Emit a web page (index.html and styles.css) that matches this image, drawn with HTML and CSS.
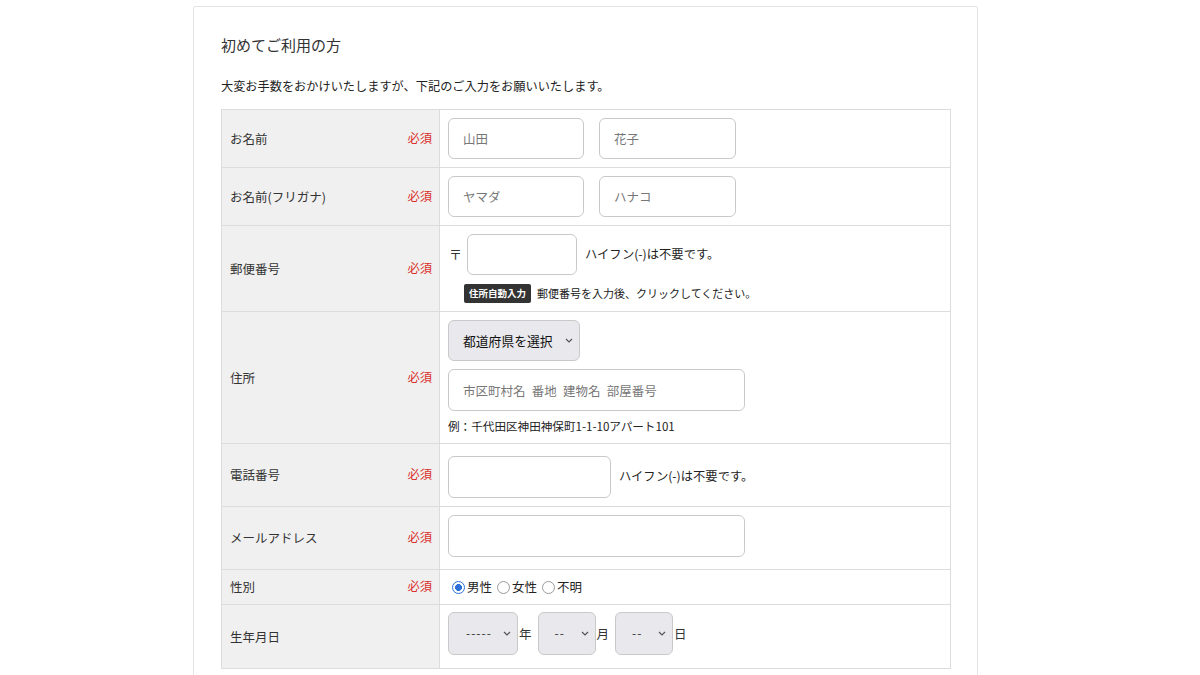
FILE: index.html
```html
<!DOCTYPE html>
<html lang="ja">
<head>
<meta charset="utf-8">
<title>初めてご利用の方</title>
<link rel="stylesheet" href="styles.css">
</head>
<body>
<div class="card">
  <h2 class="title">初めてご利用の方</h2>
  <p class="lead">大変お手数をおかけいたしますが、下記のご入力をお願いいたします。</p>
  <table class="form">
    <colgroup><col class="c-label"><col class="c-field"></colgroup>
    <tr>
      <th><div class="lbl"><span>お名前</span><span class="req">必須</span></div></th>
      <td class="r-name"><div class="pair"><input class="inp w-name" placeholder="山田"><input class="inp w-name2" placeholder="花子"></div></td>
    </tr>
    <tr>
      <th><div class="lbl"><span>お名前(フリガナ)</span><span class="req">必須</span></div></th>
      <td class="r-kana"><div class="pair"><input class="inp w-name" placeholder="ヤマダ"><input class="inp w-name2" placeholder="ハナコ"></div></td>
    </tr>
    <tr>
      <th><div class="lbl"><span>郵便番号</span><span class="req">必須</span></div></th>
      <td class="r-zip">
        <div class="line"><span class="zipmark">〒</span><input class="inp w-zip"><span class="note">ハイフン(-)は不要です。</span></div>
        <div class="line auto"><span class="btn">住所自動入力</span><span class="small">郵便番号を入力後、クリックしてください。</span></div>
      </td>
    </tr>
    <tr>
      <th><div class="lbl"><span>住所</span><span class="req">必須</span></div></th>
      <td class="r-addr">
        <div class="sel w-pref"><span class="sel-text">都道府県を選択</span><svg class="chev" viewBox="0 0 8 5" width="8" height="5"><path d="M1 1 L4 4 L7 1" fill="none" stroke="#555" stroke-width="1.2"/></svg></div>
        <input class="inp w-long addr" placeholder="市区町村名&ensp;番地&ensp;建物名&ensp;部屋番号">
        <p class="example">例：千代田区神田神保町1-1-10アパート101</p>
      </td>
    </tr>
    <tr>
      <th><div class="lbl"><span>電話番号</span><span class="req">必須</span></div></th>
      <td class="r-tel"><div class="line"><input class="inp w-tel"><span class="note">ハイフン(-)は不要です。</span></div></td>
    </tr>
    <tr>
      <th><div class="lbl"><span>メールアドレス</span><span class="req">必須</span></div></th>
      <td class="r-mail"><div class="line"><input class="inp w-long"></div></td>
    </tr>
    <tr>
      <th><div class="lbl"><span>性別</span><span class="req">必須</span></div></th>
      <td class="r-sex">
        <div class="radios">
          <span class="radio on"></span><span class="rlabel">男性</span>
          <span class="radio"></span><span class="rlabel">女性</span>
          <span class="radio"></span><span class="rlabel">不明</span>
        </div>
      </td>
    </tr>
    <tr>
      <th><div class="lbl"><span>生年月日</span></div></th>
      <td class="r-birth">
        <div class="line dates">
          <div class="sel w-year"><span class="sel-dash">-----</span><svg class="chev" viewBox="0 0 8 5" width="8" height="5"><path d="M1 1 L4 4 L7 1" fill="none" stroke="#555" stroke-width="1.2"/></svg></div><span class="unit">年</span>
          <div class="sel w-md"><span class="sel-dash">--</span><svg class="chev" viewBox="0 0 8 5" width="8" height="5"><path d="M1 1 L4 4 L7 1" fill="none" stroke="#555" stroke-width="1.2"/></svg></div><span class="unit">月</span>
          <div class="sel w-md"><span class="sel-dash">--</span><svg class="chev" viewBox="0 0 8 5" width="8" height="5"><path d="M1 1 L4 4 L7 1" fill="none" stroke="#555" stroke-width="1.2"/></svg></div><span class="unit">日</span>
        </div>
      </td>
    </tr>
  </table>
</div>
</body>
</html>
```

FILE: styles.css
```css
* { box-sizing: border-box; }
html, body { margin: 0; padding: 0; background: #ffffff; }
body {
  font-family: "Noto Sans CJK JP", "Noto Sans", sans-serif;
  color: #333333;
  font-size: 13px;
  line-height: 1.4;
}
.card {
  width: 785px;
  margin: 6px 0 0 193px;
  border: 1px solid #e4e4e4;
  border-radius: 2px;
  padding: 27px 27px 40px 27px;
  min-height: 720px;
}
.title {
  margin: 0;
  font-size: 15px;
  font-weight: 400;
  line-height: 22px;
  color: #333;
}
.lead {
  margin: 21px 0 0 0;
  font-size: 12.2px;
  line-height: 18px;
  color: #222;
}
.form {
  margin-top: 14px;
  width: 729px;
  border-collapse: collapse;
  table-layout: fixed;
}
.c-label { width: 218px; }
.c-field { width: 511px; }
.form th, .form td {
  border: 1px solid #dcdcdc;
  vertical-align: middle;
  text-align: left;
}
.form th {
  background: #f0f0f0;
  font-weight: 400;
  padding: 0 7px 0 8px;
}
.lbl {
  display: flex;
  justify-content: space-between;
  align-items: center;
  font-size: 12.5px;
  color: #333;
}
.req { color: #d9302c; font-size: 12.3px; }
.form td { padding: 8px 8px 8px 8px; }

.inp {
  display: block;
  height: 41px;
  border: 1.5px solid #c9c9c9;
  border-radius: 6px;
  padding: 0 14px;
  font-family: inherit;
  font-size: 12.5px;
  color: #333;
  background: #fff;
  outline: none;
}
.inp::placeholder { color: #777; }
.pair { display: flex; gap: 15px; }
.w-name { width: 136px; }
.w-name2 { width: 137px; }
.w-zip { width: 110px; }
.w-tel { width: 163px; height: 42px; }
.w-long { width: 297px; height: 42px; }

.line { display: flex; align-items: center; }
.zipmark { width: 19px; padding-left: 1px; font-size: 13px; }
.note { margin-left: 8px; font-size: 12.3px; color: #222; }
.auto { margin-top: 9px; padding-left: 16px; }
.btn {
  background: #333;
  color: #fff;
  font-size: 9.5px;
  font-weight: 700;
  line-height: 19px;
  height: 19px;
  padding: 0 5px;
  border-radius: 2px;
}
.small { margin-left: 6px; font-size: 11px; color: #222; }

.form td.r-addr { padding-bottom: 8px; }
.form td.r-tel { padding-top: 12px; padding-bottom: 8px; }
.form td.r-mail { padding-top: 8px; padding-bottom: 12px; }
.form td.r-birth { padding-top: 7px; padding-bottom: 13px; }

.sel {
  display: flex;
  align-items: center;
  justify-content: space-between;
  height: 41px;
  background: #e9e9ed;
  border: 1.5px solid #c9c9c9;
  border-radius: 6px;
  color: #222;
}
.w-pref { width: 132px; padding: 0 6px 0 14px; }
.sel-text { font-size: 12.8px; font-weight: 400; color: #111; }
.addr { margin-top: 8px; }
.example { margin: 6px 0 0 0; font-size: 11.6px; line-height: 18px; color: #222; }

.dates { align-items: center; }
.w-year { width: 70px; height: 43px; padding: 0 6px 0 17px; }
.w-md { width: 58px; height: 43px; padding: 0 6px 0 16px; }
.sel-dash { font-size: 12px; color: #333; letter-spacing: 1px; }
.unit { font-size: 12.5px; margin: 0 6px 0 1px; }

.radios { display: flex; align-items: center; height: 18px; font-size: 12.5px; }
.radio {
  display: inline-block;
  width: 13px;
  height: 13px;
  border: 1px solid #9a9a9a;
  border-radius: 50%;
  margin: 0 2px 0 4px;
  background: #fff;
}
.radio:first-child { margin-left: 4px; }
.radio.on {
  border: 1px solid #2b72d9;
  background: radial-gradient(circle, #2f6fd8 0 3.2px, #fff 3.7px);
}
.rlabel { margin-right: 1px; color: #222; }
```
